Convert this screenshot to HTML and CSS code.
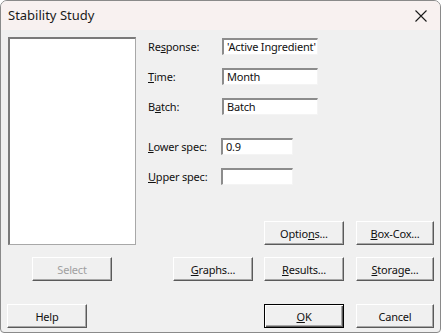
FILE: index.html
```html
<!DOCTYPE html>
<html>
<head>
<meta charset="utf-8">
<link rel="stylesheet" href="styles.css">
</head>
<body>
<div class="window">
  <div class="titlebar">
    <span class="title">Stability Study</span>
    <svg class="close" width="12" height="12" viewBox="0 0 12 12"><path d="M0.5 0.5 L11.5 11.5 M11.5 0.5 L0.5 11.5" stroke="#1a1a1a" stroke-width="1.1" fill="none"/></svg>
  </div>
  <div class="content">
    <div class="listbox"></div>
    <div class="fields">
      <div class="field"><span class="label">Re<u>s</u>ponse:</span><span class="input wide">'Active Ingredient'</span></div>
      <div class="field"><span class="label"><u>T</u>ime:</span><span class="input wide">Month</span></div>
      <div class="field"><span class="label">B<u>a</u>tch:</span><span class="input wide">Batch</span></div>
      <div class="field spaced"><span class="label"><u>L</u>ower spec:</span><span class="input narrow">0.9</span></div>
      <div class="field"><span class="label"><u>U</u>pper spec:</span><span class="input narrow"></span></div>
    </div>
    <button class="btn options">Optio<u>n</u>s...</button>
    <button class="btn boxcox"><u>B</u>ox-Cox...</button>
    <button class="btn select" disabled>Select</button>
    <button class="btn graphs"><u>G</u>raphs...</button>
    <button class="btn results"><u>R</u>esults...</button>
    <button class="btn storage"><u>S</u>torage...</button>
    <button class="btn help">Help</button>
    <button class="btn ok default"><u>O</u>K</button>
    <button class="btn cancel">Cancel</button>
  </div>
</div>
</body>
</html>
```

FILE: styles.css
```css
html, body {
  margin: 0;
  padding: 0;
  background: #ffffff;
}
body {
  font-family: "Noto Sans", sans-serif;
  font-size: 11px;
  letter-spacing: -0.2px;
  color: #111;
}
.window {
  width: 439px;
  height: 331px;
  border: 1px solid #8a8a8a;
  border-radius: 7px 7px 4px 4px;
  overflow: hidden;
  background: #f0f0f0;
  box-sizing: content-box;
}
.titlebar {
  height: 29px;
  background: #f8f1f0;
  display: flex;
  align-items: center;
  justify-content: space-between;
  padding: 0 13px 0 7px;
}
.title {
  font-size: 13px;
  letter-spacing: 0;
  color: #1a1a1a;
  margin-top: -1px;
}
.close {
  display: block;
}
.content {
  display: grid;
  grid-template-columns: 25px 80px 36px 25px 80px 11px 80px 12px 78px;
  grid-template-rows: 184px 24px 12px 24px 23px 24px;
  padding: 7px 0 0 6px;
}
.listbox {
  grid-column: 1 / 4;
  grid-row: 1 / 3;
  margin-left: 1px;
  width: 128px;
  box-sizing: border-box;
  background: #fff;
  border-top: 2px solid #7a7a7a;
  border-left: 2px solid #7a7a7a;
  border-right: 1px solid #a8a8a8;
  border-bottom: 1px solid #a8a8a8;
}
.fields {
  grid-column: 4 / -1;
  grid-row: 1;
  display: flex;
  flex-direction: column;
  gap: 13px;
  padding-top: 1px;
}
.field {
  display: flex;
  align-items: center;
  height: 17px;
}
.field.spaced {
  margin-top: 10px;
}
.label {
  width: 74px;
  flex: none;
}
.input {
  height: 17px;
  box-sizing: border-box;
  background: #fff;
  border-top: 2px solid #8c8c8c;
  border-left: 2px solid #8c8c8c;
  border-right: 1px solid #f4f4f4;
  border-bottom: 1px solid #f4f4f4;
  padding: 0 0 0 3px;
  line-height: 14px;
  white-space: nowrap;
  overflow: hidden;
}
.input.wide { width: 96px; }
.input.narrow { width: 72px; margin-left: -1px; }

.btn {
  font-family: inherit;
  font-size: 11px;
  letter-spacing: -0.2px;
  color: #111;
  height: 24px;
  padding: 0;
  margin: 0;
  box-sizing: border-box;
  background: #f0f0f0;
  border-top: 1px solid #ffffff;
  border-left: 1px solid #ffffff;
  border-right: 1px solid #5a5a5a;
  border-bottom: 1px solid #5a5a5a;
  box-shadow: inset -1px -1px 0 #a8a8a8;
  white-space: nowrap;
}
.btn:disabled { color: #a0a0a0; }
.btn.default {
  border: 1px solid #000;
  box-shadow: inset 1px 1px 0 #ffffff, inset -1px -1px 0 #5a5a5a, inset -2px -2px 0 #a8a8a8;
}
.options { grid-column: 7; grid-row: 2; }
.boxcox { grid-column: 9; grid-row: 2; }
.select { grid-column: 2; grid-row: 4; }
.graphs { grid-column: 5; grid-row: 4; }
.results { grid-column: 7; grid-row: 4; }
.storage { grid-column: 9; grid-row: 4; }
.help { grid-column: 1 / 3; grid-row: 6; width: 80px; }
.ok { grid-column: 7; grid-row: 6; }
.cancel { grid-column: 9; grid-row: 6; }
```
